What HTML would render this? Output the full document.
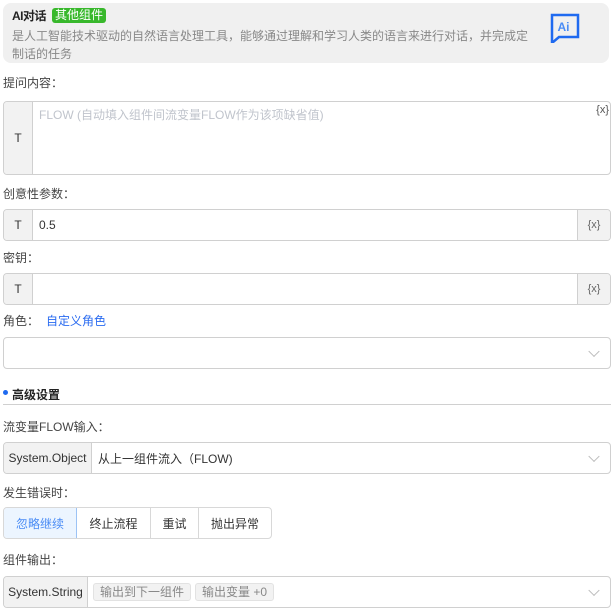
<!DOCTYPE html>
<html><head><meta charset="utf-8"><style>
*{box-sizing:border-box;margin:0;padding:0}
body{width:614px;height:612px;background:#fff;font-family:"Liberation Sans","Noto Sans CJK SC",sans-serif;font-size:12px;color:#333;position:relative;overflow:hidden}
.a{position:absolute}
.hd{left:3px;top:3px;width:606px;height:60px;background:#f0f0f0;border-radius:8px}
.lbl{position:absolute;left:3px;color:#444;font-size:12px;line-height:14px}
.box{position:absolute;left:3px;width:608px;border:1px solid #d0d0d0;border-radius:4px;background:#fff;overflow:hidden}
.pre{position:absolute;left:0;top:0;bottom:0;background:#f2f2f2;border-right:1px solid #d0d0d0;display:flex;align-items:center;justify-content:center;color:#333;font-weight:normal}
.suf{position:absolute;right:0;top:0;bottom:0;width:33px;background:#f2f2f2;border-left:1px solid #d0d0d0;display:flex;align-items:center;justify-content:center;color:#666;font-size:11px}
.val{position:absolute;top:0;bottom:0;display:flex;align-items:center}
.chev{position:absolute;right:12px;top:50%;width:8px;height:8px;border-right:1px solid #bbb;border-bottom:1px solid #bbb;transform:translateY(-70%) rotate(45deg)}
.tag{position:absolute;top:6px;height:18px;background:#f2f2f2;border:1px solid #e2e2e2;border-radius:3px;color:#888;line-height:16px;padding:0 6px}
.btn{position:absolute;top:0;height:100%;display:flex;align-items:center;justify-content:center;border-right:1px solid #d8d8d8}
</style></head><body>
<div class="a hd"></div>
<div class="a" style="left:12px;top:9px;font-weight:bold;font-size:12px;line-height:14px;color:#222;letter-spacing:-0.5px">AI对话</div>
<div class="a" style="left:52px;top:8px;background:#38b82c;color:#fff;border-radius:3px;padding:0 3px;line-height:15px;font-size:12px">其他组件</div>
<div class="a" style="left:12px;top:27px;width:522px;color:#888;line-height:18px;font-size:12px">是人工智能技术驱动的自然语言处理工具，能够通过理解和学习人类的语言来进行对话，并完成定制话的任务</div>
<svg class="a" style="left:550px;top:13px" width="30" height="30" viewBox="0 0 30 30"><path d="M2 2H28V24H9L2 30Z" fill="none" stroke="#1f6af0" stroke-width="2.5"/><text x="7.5" y="18" font-family="Liberation Sans" font-weight="bold" font-size="12" fill="#4a8cf5">Ai</text></svg>

<div class="lbl" style="top:76px">提问内容：</div>
<div class="box" style="top:101px;height:74px"><div class="pre" style="width:29px">T</div>
<div class="a" style="left:35px;top:4px;color:#c0c4cc">FLOW (自动填入组件间流变量FLOW作为该项缺省值)</div>
<div class="a" style="right:1px;top:2px;color:#555;font-size:11px">{x}</div></div>

<div class="lbl" style="top:187px">创意性参数：</div>
<div class="box" style="top:209px;height:32px"><div class="pre" style="width:29px">T</div><div class="val" style="left:35px">0.5</div><div class="suf">{x}</div></div>

<div class="lbl" style="top:251px">密钥：</div>
<div class="box" style="top:273px;height:32px"><div class="pre" style="width:29px">T</div><div class="suf">{x}</div></div>

<div class="lbl" style="top:314px">角色：<span style="margin-left:7px;color:#2a6bf0">自定义角色</span></div>
<div class="box" style="top:337px;height:32px"><div class="chev"></div></div>

<div class="a" style="left:3px;top:390px;width:5px;height:5px;border-radius:50%;background:#1f6af0"></div>
<div class="a" style="left:12px;top:386px;font-weight:bold;color:#222">高级设置</div>
<div class="a" style="left:3px;top:404px;width:608px;height:1px;background:#d0d0d0"></div>

<div class="lbl" style="top:420px">流变量FLOW输入：</div>
<div class="box" style="top:442px;height:32px"><div class="pre" style="width:88px">System.Object</div><div class="val" style="left:94px">从上一组件流入（FLOW)</div><div class="chev"></div></div>

<div class="lbl" style="top:486px">发生错误时：</div>
<div class="a" style="left:3px;top:507px;width:269px;height:32px;border:1px solid #d8d8d8;border-radius:4px;overflow:hidden">
<div class="btn" style="left:0;width:73px;background:#ecf5ff;color:#4a8cf5;border-right:1px solid #9cc3f5">忽略继续</div>
<div class="btn" style="left:73px;width:74px">终止流程</div>
<div class="btn" style="left:147px;width:48px">重试</div>
<div class="btn" style="left:195px;width:72px;border-right:none">抛出异常</div></div>

<div class="lbl" style="top:553px">组件输出：</div>
<div class="box" style="top:576px;height:32px"><div class="pre" style="width:84px">System.String</div>
<div class="tag" style="left:89px">输出到下一组件</div><div class="tag" style="left:191px">输出变量 +0</div><div class="chev"></div></div>
</body></html>
